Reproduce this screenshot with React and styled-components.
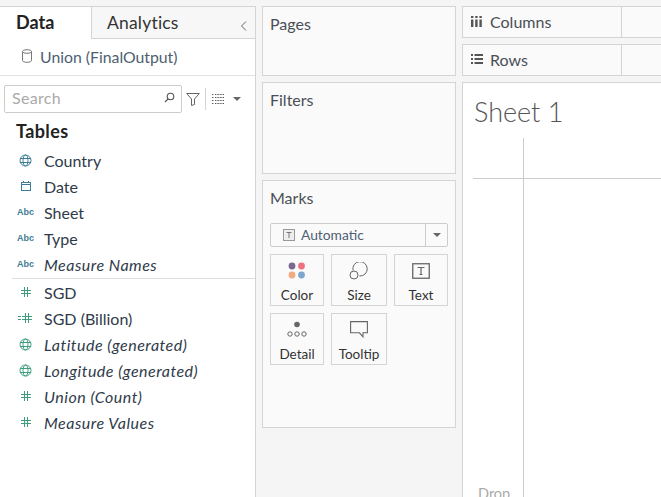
import React from 'react';
import styled, { createGlobalStyle } from 'styled-components';

const BLUE = '#3f7d96';
const GREEN = '#3f9e7f';

const GlobalStyle = createGlobalStyle`
  html, body {
    margin: 0;
    padding: 0;
    background: #f5f5f5;
    overflow: hidden;
  }
  * {
    box-sizing: border-box;
  }
`;

const GlobeIcon = ({ color }) => (
  <svg width="13" height="13" viewBox="0 0 13 13" fill="none" stroke={color} strokeWidth="1">
    <circle cx="6.5" cy="6.5" r="5.5" />
    <ellipse cx="6.5" cy="6.5" rx="2.5" ry="5.5" />
    <path d="M1 4.5h11M1 8.5h11" />
  </svg>
);

const CalendarIcon = () => (
  <svg width="12" height="12" viewBox="0 0 12 12" fill="none" stroke={BLUE} strokeWidth="1">
    <rect x="1.5" y="2.5" width="9" height="8" />
    <path d="M1.5 4.5h9M3.5 1v2M8.5 1v2" />
  </svg>
);

const HashIcon = () => (
  <svg width="12" height="12" viewBox="0 0 12 12" fill="none" stroke={GREEN} strokeWidth="1">
    <path d="M4.5 1v10M7.5 1v10M1 4.5h10M1 7.5h10" />
  </svg>
);

const CalcHashIcon = () => (
  <svg width="15" height="12" viewBox="0 0 15 12" fill="none" stroke={GREEN} strokeWidth="1">
    <path d="M7.5 1v10M10.5 1v10M4 4.5h10M4 7.5h10M0 4.5h3M0 7.5h3" />
  </svg>
);

const CylinderIcon = () => (
  <svg width="12" height="14" viewBox="0 0 12 14" fill="none" stroke="#777" strokeWidth="1">
    <ellipse cx="6" cy="2.5" rx="4.5" ry="1.8" />
    <path d="M1.5 2.5v9c0 1 2 1.8 4.5 1.8s4.5-.8 4.5-1.8v-9" />
  </svg>
);

const SearchIcon = () => (
  <svg width="11" height="11" viewBox="0 0 11 11" fill="none" stroke="#555" strokeWidth="1.1">
    <circle cx="6.5" cy="4.5" r="3.3" />
    <path d="M4 7L1 10" />
  </svg>
);

const FunnelIcon = () => (
  <svg width="14" height="14" viewBox="0 0 14 14" fill="none" stroke="#666" strokeWidth="1">
    <path d="M.7 1.5h12.6L8.5 7v5.5l-3 1V7z" />
  </svg>
);

const ListGridIcon = () => (
  <svg width="12" height="10" viewBox="0 0 12 10" fill="none" stroke="#555" strokeWidth="1">
    <path d="M0 .5h2M3 .5h9M0 3.5h2M3 3.5h9M0 6.5h2M3 6.5h9M0 9.5h2M3 9.5h9" strokeDasharray="1 .6" />
  </svg>
);

const ColorIcon = () => (
  <svg width="18" height="17" viewBox="0 0 18 17">
    <circle cx="4" cy="4" r="3.4" fill="#7b6790" />
    <circle cx="13.5" cy="4" r="3.4" fill="#f0707f" />
    <circle cx="4" cy="13" r="3.4" fill="#f3a981" />
    <circle cx="13.5" cy="13" r="3.4" fill="#7ea6cc" />
  </svg>
);

const SizeIcon = () => (
  <svg width="20" height="18" viewBox="0 0 20 18" fill="none" stroke="#666" strokeWidth="1">
    <path d="M4 8.4A7.2 7.2 0 1 1 10.4 14" />
    <circle cx="5" cy="13" r="4" />
  </svg>
);

const TextIcon = () => (
  <svg width="18" height="16" viewBox="0 0 18 16" fill="none" stroke="#666">
    <rect x=".75" y=".75" width="16.5" height="14.5" strokeWidth="1.3" />
    <path d="M5.5 4.5h7M9 4.5v7M7.5 11.5h3" strokeWidth="1.2" />
  </svg>
);

const DetailIcon = () => (
  <svg width="20" height="17" viewBox="0 0 20 17" fill="none" stroke="#666" strokeWidth="1">
    <circle cx="10" cy="3.5" r="2.8" fill="#666" stroke="none" />
    <circle cx="3" cy="13" r="2.2" />
    <circle cx="10" cy="13" r="2.2" />
    <circle cx="17" cy="13" r="2.2" />
  </svg>
);

const TooltipIcon = () => (
  <svg width="18" height="17" viewBox="0 0 18 17" fill="none" stroke="#666" strokeWidth="1.1">
    <path d="M.6.6h16.8v11.2h-4.4v4l-3.6-4H.6z" />
  </svg>
);

const ColumnsIcon = () => (
  <svg width="11" height="11" viewBox="0 0 11 11" fill="#555">
    <rect x="0" y="3.5" width="2.4" height="7.5" />
    <rect x="4.2" y="3.5" width="2.4" height="7.5" />
    <rect x="8.4" y="3.5" width="2.4" height="7.5" />
    <rect x="0" y="0" width="2.4" height="2" />
    <rect x="4.2" y="0" width="2.4" height="2" />
    <rect x="8.4" y="0" width="2.4" height="2" />
  </svg>
);

const RowsIcon = () => (
  <svg width="12" height="10" viewBox="0 0 12 10" fill="#555">
    <rect x="0" y="0" width="2" height="2" />
    <rect x="3.5" y="0" width="8.5" height="2" />
    <rect x="0" y="4" width="2" height="2" />
    <rect x="3.5" y="4" width="8.5" height="2" />
    <rect x="0" y="8" width="2" height="2" />
    <rect x="3.5" y="8" width="8.5" height="2" />
  </svg>
);

const dimensions = [
  { name: 'Country', icon: <GlobeIcon color={BLUE} /> },
  { name: 'Date', icon: <CalendarIcon /> },
  { name: 'Sheet', icon: 'abc' },
  { name: 'Type', icon: 'abc' },
  { name: 'Measure Names', icon: 'abc', generated: true },
];

const measures = [
  { name: 'SGD', icon: <HashIcon /> },
  { name: 'SGD (Billion)', icon: <CalcHashIcon /> },
  { name: 'Latitude (generated)', icon: <GlobeIcon color={GREEN} />, generated: true },
  { name: 'Longitude (generated)', icon: <GlobeIcon color={GREEN} />, generated: true },
  { name: 'Union (Count)', icon: <HashIcon />, generated: true },
  { name: 'Measure Values', icon: <HashIcon />, generated: true },
];

const marks = [
  { label: 'Color', icon: <ColorIcon />, width: 54 },
  { label: 'Size', icon: <SizeIcon />, width: 56 },
  { label: 'Text', icon: <TextIcon />, width: 54 },
  { label: 'Detail', icon: <DetailIcon />, width: 54 },
  { label: 'Tooltip', icon: <TooltipIcon />, width: 56 },
];

const FieldRow = ({ field }) => (
  <Field>
    <FieldIcon>
      {field.icon === 'abc' ? <AbcBadge>Abc</AbcBadge> : field.icon}
    </FieldIcon>
    <FieldName $generated={field.generated}>{field.name}</FieldName>
  </Field>
);

const Shelf = ({ icon, label }) => (
  <ShelfBar>
    <ShelfLabel>
      <ShelfIcon>{icon}</ShelfIcon>
      <span>{label}</span>
    </ShelfLabel>
  </ShelfBar>
);

const App = () => (
  <>
    <GlobalStyle />
    <Page>
      <Sidebar>
        <Tabs>
          <ActiveTab>Data</ActiveTab>
          <InactiveTab>
            Analytics
            <Collapse>
              <svg width="7" height="10" viewBox="0 0 7 10" fill="none" stroke="#666">
                <path d="M6 .5L1.5 5 6 9.5" />
              </svg>
            </Collapse>
          </InactiveTab>
        </Tabs>
        <Source>
          <CylinderIcon />
          <span>Union (FinalOutput)</span>
        </Source>
        <SearchRow>
          <SearchBox>
            <SearchText>Search</SearchText>
            <SearchIcon />
          </SearchBox>
          <FunnelIcon />
          <Separator />
          <ListGridIcon />
          <Caret />
        </SearchRow>
        <TablesHeading>Tables</TablesHeading>
        <FieldGroup>
          {dimensions.map(field => (
            <FieldRow key={field.name} field={field} />
          ))}
        </FieldGroup>
        <Divider />
        <FieldGroup>
          {measures.map(field => (
            <FieldRow key={field.name} field={field} />
          ))}
        </FieldGroup>
      </Sidebar>

      <Cards>
        <Card $height={70}>
          <CardTitle>Pages</CardTitle>
        </Card>
        <Card $height={92}>
          <CardTitle>Filters</CardTitle>
        </Card>
        <Card $height={248}>
          <CardTitle>Marks</CardTitle>
          <MarkSelect>
            <MarkSelectLabel>
              <svg width="12" height="12" viewBox="0 0 12 12" fill="none" stroke="#999">
                <rect x=".5" y=".5" width="11" height="11" fill="#eee" />
                <path d="M3.5 3.5h5M6 3.5v5.5" stroke="#777" />
              </svg>
              Automatic
            </MarkSelectLabel>
            <MarkSelectArrow>
              <Caret />
            </MarkSelectArrow>
          </MarkSelect>
          <MarkButtons>
            {marks.map(mark => (
              <MarkButton key={mark.label} $width={mark.width}>
                <MarkIcon>{mark.icon}</MarkIcon>
                <span>{mark.label}</span>
              </MarkButton>
            ))}
          </MarkButtons>
        </Card>
      </Cards>

      <Main>
        <Shelf icon={<ColumnsIcon />} label="Columns" />
        <Shelf icon={<RowsIcon />} label="Rows" />
        <View>
          <SheetTitle>Sheet 1</SheetTitle>
          <Axes>
            <AxisCorner />
            <AxisTop />
            <AxisRows>
              <DropHint>Drop</DropHint>
            </AxisRows>
            <AxisBody />
          </Axes>
        </View>
      </Main>
    </Page>
  </>
);

export default App;

const Page = styled.div`
  display: flex;
  width: 661px;
  height: 497px;
  padding-top: 6px;
  overflow: hidden;
  background: #f5f5f5;
  font-family: Lato, 'Open Sans', sans-serif;
  color: #333;
`;

const Sidebar = styled.aside`
  width: 256px;
  flex-shrink: 0;
  background: #fff;
  border-top: 1px solid #d4d4d4;
  border-right: 1px solid #d4d4d4;
`;

const Tabs = styled.div`
  display: flex;
  height: 32px;
`;

const ActiveTab = styled.div`
  width: 91px;
  padding: 4px 0 0 16px;
  font-size: 18px;
  font-weight: 700;
  color: #222;
`;

const InactiveTab = styled.div`
  flex: 1;
  display: flex;
  justify-content: space-between;
  padding: 5px 8px 0 15px;
  font-size: 17.5px;
  letter-spacing: 0.2px;
  color: #333;
  background: #f7f7f7;
  border-left: 1px solid #d4d4d4;
  border-bottom: 1px solid #d4d4d4;
`;

const Collapse = styled.span`
  padding-top: 4px;
  line-height: 1;
`;

const Source = styled.div`
  display: flex;
  align-items: center;
  gap: 7px;
  height: 37px;
  padding: 0 0 2px 21px;
  font-size: 15.8px;
  color: #4e5f73;
  border-bottom: 1px solid #e2e2e2;
`;

const SearchRow = styled.div`
  display: flex;
  align-items: center;
  height: 27px;
  margin-top: 9px;
  padding-left: 4px;
`;

const SearchBox = styled.div`
  display: flex;
  align-items: center;
  justify-content: space-between;
  width: 178px;
  height: 28px;
  padding: 0 6px 2px 7px;
  margin-right: 4px;
  border: 1px solid #ccc;
  border-radius: 2px;
`;

const SearchText = styled.span`
  font-size: 16px;
  letter-spacing: 0.3px;
  color: #aaa;
`;

const Separator = styled.span`
  width: 1px;
  height: 22px;
  margin: 0 6px 0 5px;
  background: #d4d4d4;
`;

const Caret = styled.span`
  display: inline-block;
  margin-left: 9px;
  width: 0;
  height: 0;
  border-left: 4px solid transparent;
  border-right: 4px solid transparent;
  border-top: 4px solid #666;
`;

const TablesHeading = styled.h2`
  margin: 7px 0 4px;
  padding-left: 16px;
  font-size: 18px;
  letter-spacing: 0.4px;
  line-height: 24px;
  font-weight: 700;
  color: #222;
`;

const FieldGroup = styled.div`
  display: flex;
  flex-direction: column;
`;

const Field = styled.div`
  display: flex;
  align-items: center;
  height: 26px;
  padding-left: 17px;
`;

const FieldIcon = styled.span`
  display: flex;
  align-items: center;
  justify-content: center;
  width: 17px;
  margin-right: 10px;
`;

const AbcBadge = styled.span`
  font-family: 'Liberation Sans', sans-serif;
  font-size: 9px;
  font-weight: 700;
  color: ${BLUE};
`;

const FieldName = styled.span`
  font-size: 16px;
  font-style: ${props => (props.$generated ? 'italic' : 'normal')};
  letter-spacing: ${props => (props.$generated ? '0.5px' : '0')};
  color: #2f3b4a;
`;

const Divider = styled.div`
  height: 1px;
  margin: 1px 0 0 12px;
  background: #dedede;
`;

const Cards = styled.div`
  display: flex;
  flex-direction: column;
  gap: 6px;
  width: 194px;
  flex-shrink: 0;
  margin: 0 6px;
`;

const Card = styled.section`
  height: ${props => props.$height}px;
  padding: 7px 7px;
  background: #fafafa;
  border: 1px solid #d4d4d4;
`;

const CardTitle = styled.h3`
  margin: 0;
  font-size: 16px;
  line-height: 20px;
  font-weight: 400;
  color: #4a4f57;
`;

const MarkSelect = styled.div`
  display: flex;
  height: 24px;
  margin-top: 15px;
  background: #fafafa;
  border: 1px solid #ccc;
  border-radius: 2px;
`;

const MarkSelectLabel = styled.div`
  flex: 1;
  display: flex;
  align-items: center;
  gap: 6px;
  padding: 0 0 1px 12px;
  font-size: 13.8px;
  color: #4e5f73;
`;

const MarkSelectArrow = styled.div`
  display: flex;
  align-items: center;
  justify-content: center;
  width: 22px;
  border-left: 1px solid #ccc;
  ${Caret} {
    margin-left: 0;
  }
`;

const MarkButtons = styled.div`
  display: flex;
  flex-wrap: wrap;
  gap: 7px;
  margin-top: 7px;
`;

const MarkButton = styled.div`
  display: flex;
  flex-direction: column;
  align-items: center;
  width: ${props => props.$width}px;
  height: 52px;
  padding-top: 6px;
  font-size: 13.5px;
  color: #333;
  border: 1px solid #d4d4d4;
`;

const MarkIcon = styled.span`
  display: flex;
  align-items: center;
  height: 19px;
  margin-bottom: 7px;
`;

const Main = styled.div`
  flex: 1;
  display: flex;
  flex-direction: column;
  gap: 6px;
  min-width: 0;
`;

const ShelfBar = styled.div`
  height: 32px;
  background: #fafafa;
  border: 1px solid #d4d4d4;
  border-right: none;
`;

const ShelfLabel = styled.div`
  display: flex;
  align-items: center;
  gap: 6px;
  width: 159px;
  height: 100%;
  padding: 0 0 2px 7px;
  font-size: 16px;
  color: #4a4f57;
  border-right: 1px solid #d4d4d4;
`;

const ShelfIcon = styled.span`
  display: flex;
  align-items: center;
  width: 13px;
  margin-left: 1px;
`;

const View = styled.div`
  flex: 1;
  display: flex;
  flex-direction: column;
  min-height: 0;
  padding-left: 10px;
  background: #fff;
  border: 1px solid #d4d4d4;
  border-right: none;
  border-bottom: none;
`;

const SheetTitle = styled.div`
  height: 55px;
  padding: 11px 0 0 1px;
  font-size: 27px;
  font-weight: 300;
  line-height: 36px;
  color: #555;
`;

const Axes = styled.div`
  flex: 1;
  display: grid;
  grid-template-columns: 50px 1fr;
  grid-template-rows: 41px 1fr;
`;

const AxisCorner = styled.div`
  border-bottom: 1px solid #ccc;
`;

const AxisTop = styled.div`
  border-left: 1px solid #ccc;
  border-bottom: 1px solid #ccc;
`;

const AxisRows = styled.div`
  display: flex;
  align-items: flex-end;
  padding-left: 5px;
`;

const AxisBody = styled.div`
  border-left: 1px solid #ccc;
`;

const DropHint = styled.span`
  margin-bottom: -6px;
  font-size: 14.5px;
  line-height: 18px;
  color: #aaa;
`;
